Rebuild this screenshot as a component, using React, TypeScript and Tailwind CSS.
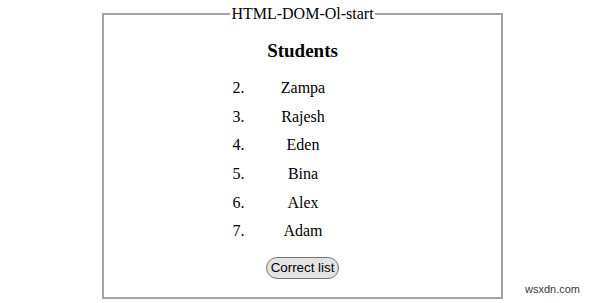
const students = ["Zampa", "Rajesh", "Eden", "Bina", "Alex", "Adam"];

export default function App() {
  return (
    <div className="relative w-[600px] h-[303px] bg-white overflow-hidden">
      <fieldset
        className="ml-[102px] mt-[5px] w-[401px] h-[294px] border-2 border-[#a3a3a3] text-black"
        style={{ fontFamily: '"Liberation Serif", "Times New Roman", serif' }}
      >
        <legend className="mx-auto px-[1px] text-[16px] leading-[18px]">HTML-DOM-Ol-start</legend>
        <div className="flex flex-col items-center">
          <h3 className="mt-[17px] text-[19px] leading-[22px] font-bold">Students</h3>
          <ol className="mt-[12px]">
            {students.map((name, i) => (
              <li key={name} className="flex h-[28.6px] items-center text-[16px]">
                <span className="w-[50px] pr-[8px] text-right">{i + 2}.</span>
                <span className="w-[100px] pl-[1px] text-center">{name}</span>
                <span className="w-[50px]" />
              </li>
            ))}
          </ol>
          <button
            type="button"
            className="mt-[11px] h-[22px] rounded-[11px] border border-[#767676] bg-[#e3e3e3] px-[4px] text-[13.33px] leading-[18px] text-black"
            style={{ fontFamily: '"Liberation Sans", Arial, sans-serif' }}
          >
            Correct list
          </button>
        </div>
      </fieldset>
      <div
        className="absolute right-[20px] bottom-[7px] text-[11px] leading-[13px] text-[#3a3a3a]"
        style={{ fontFamily: '"Liberation Sans", Arial, sans-serif' }}
      >
        wsxdn.com
      </div>
    </div>
  );
}
